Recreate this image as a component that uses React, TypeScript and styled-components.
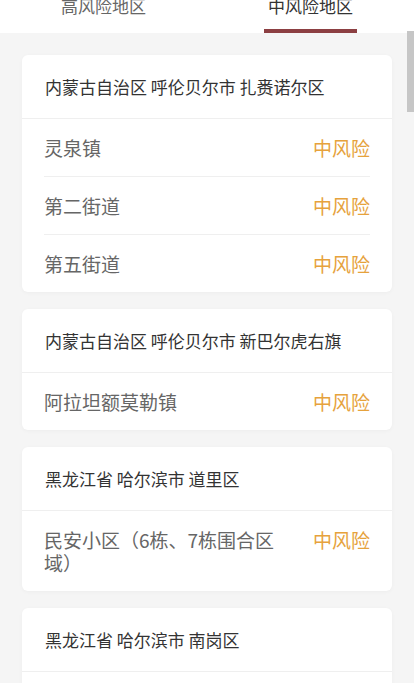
import React from "react";
import styled, { createGlobalStyle } from "styled-components";

const Global = createGlobalStyle`
  html, body { margin: 0; padding: 0; overflow: hidden; background: #f5f5f5; }
  body { font-family: "Noto Sans CJK SC", "Noto Sans", sans-serif; }
  * { box-sizing: border-box; }
`;

const Page = styled.div`
  position: relative;
  min-height: 683px;
  background: #f5f5f5;
`;

const TabBar = styled.div`
  display: flex;
  height: 33px;
  background: #fff;
`;

const Tab = styled.div<{ $active?: boolean }>`
  flex: 1;
  display: flex;
  flex-direction: column;
  align-items: center;
  justify-content: space-between;
  font-size: 17px;
  line-height: 14px;
  color: ${(p) => (p.$active ? "#333" : "#666")};
`;

const TabLabel = styled.span`
  display: block;
  margin-top: -1px;
`;

const Underline = styled.div<{ $show?: boolean }>`
  width: 93px;
  height: 4px;
  background: ${(p) => (p.$show ? "#8c3f42" : "transparent")};
`;

const List = styled.div`
  display: flex;
  flex-direction: column;
  gap: 17px;
  padding: 22px 22px 40px;
`;

const Card = styled.div`
  background: #fff;
  border-radius: 6px;
  box-shadow: 0 1px 4px rgba(0, 0, 0, 0.035);
  overflow: hidden;
`;

const CardHeader = styled.div`
  display: flex;
  align-items: center;
  height: 64px;
  padding: 0 23px;
  font-size: 17px;
  color: #333;
  border-bottom: 1px solid #efefef;
`;

const Rows = styled.div`
  padding: 0 22px;
`;

const Row = styled.div`
  display: flex;
  justify-content: space-between;
  align-items: flex-start;
  padding: 17px 0 17px;
  font-size: 19px;
  line-height: 23px;
  & + & {
    border-top: 1px solid #efefef;
  }
`;

const Name = styled.span`
  color: #666;
  max-width: 236px;
`;

const Risk = styled.span`
  color: #e6a23c;
  flex-shrink: 0;
`;

const ScrollThumb = styled.div`
  position: absolute;
  top: 31px;
  right: 0;
  width: 7px;
  height: 81px;
  background: #c6c6c6;
`;

type Area = { header: string; items: string[] };

const data: Area[] = [
  {
    header: "内蒙古自治区 呼伦贝尔市 扎赉诺尔区",
    items: ["灵泉镇", "第二街道", "第五街道"],
  },
  {
    header: "内蒙古自治区 呼伦贝尔市 新巴尔虎右旗",
    items: ["阿拉坦额莫勒镇"],
  },
  {
    header: "黑龙江省 哈尔滨市 道里区",
    items: ["民安小区（6栋、7栋围合区域）"],
  },
  {
    header: "黑龙江省 哈尔滨市 南岗区",
    items: ["南岗区某小区"],
  },
];

export default function App() {
  return (
    <Page>
      <Global />
      <TabBar>
        <Tab>
          <TabLabel>高风险地区</TabLabel>
          <Underline />
        </Tab>
        <Tab $active>
          <TabLabel>中风险地区</TabLabel>
          <Underline $show />
        </Tab>
      </TabBar>
      <List>
        {data.map((a) => (
          <Card key={a.header}>
            <CardHeader>{a.header}</CardHeader>
            <Rows>
              {a.items.map((it) => (
                <Row key={it}>
                  <Name>{it}</Name>
                  <Risk>中风险</Risk>
                </Row>
              ))}
            </Rows>
          </Card>
        ))}
      </List>
      <ScrollThumb />
    </Page>
  );
}
